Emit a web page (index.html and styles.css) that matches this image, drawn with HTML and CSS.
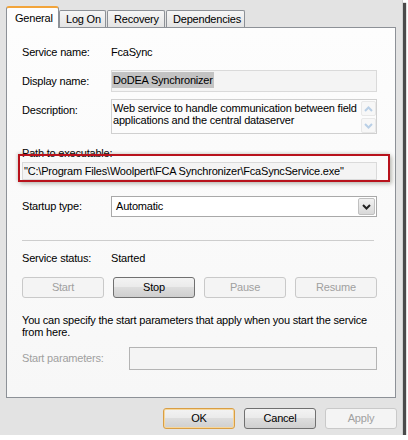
FILE: index.html
```html
<!DOCTYPE html>
<html>
<head>
<meta charset="utf-8">
<link rel="stylesheet" href="styles.css">
</head>
<body>
<div class="dialog">
  <div class="tabs">
    <div class="tab active">General</div>
    <div class="tab">Log On</div>
    <div class="tab">Recovery</div>
    <div class="tab">Dependencies</div>
  </div>
  <div class="panel">
    <div class="row r-name">
      <div class="label">Service name:</div>
      <div class="value">FcaSync</div>
    </div>
    <div class="row r-display">
      <div class="label">Display name:</div>
      <div class="box display"><span class="sel">DoDEA Synchronizer</span></div>
    </div>
    <div class="row r-desc">
      <div class="label desc-label">Description:</div>
      <div class="box textarea">
        <div class="ta-text">Web service to handle communication between field applications and the central dataserver</div>
        <div class="scroll">
          <div class="sbtn"><svg width="9" height="6" viewBox="0 0 9 6"><path d="M1 5 L4.5 1.5 L8 5" fill="none" stroke="#b9cfe6" stroke-width="2"/></svg></div>
          <div class="sbtn"><svg width="9" height="6" viewBox="0 0 9 6"><path d="M1 1 L4.5 4.5 L8 1" fill="none" stroke="#b9cfe6" stroke-width="2"/></svg></div>
        </div>
      </div>
    </div>
    <div class="path-label">Path to executable:</div>
    <div class="path-wrap">
      <div class="box path">"C:\Program Files\Woolpert\FCA Synchronizer\FcaSyncService.exe"</div>
    </div>
    <div class="row r-startup">
      <div class="label">Startup type:</div>
      <div class="box combo">
        <div class="combo-text">Automatic</div>
        <div class="combo-btn"><svg width="9" height="6" viewBox="0 0 9 6"><path d="M1 1 L4.5 4.5 L8 1" fill="none" stroke="#222" stroke-width="2"/></svg></div>
      </div>
    </div>
    <div class="sep"></div>
    <div class="row r-status">
      <div class="label">Service status:</div>
      <div class="value">Started</div>
    </div>
    <div class="svc-buttons">
      <div class="btn disabled">Start</div>
      <div class="btn">Stop</div>
      <div class="btn disabled">Pause</div>
      <div class="btn disabled">Resume</div>
    </div>
    <p class="note">You can specify the start parameters that apply when you start the service from here.</p>
    <div class="row r-params">
      <div class="label params-label">Start parameters:</div>
      <div class="box params"></div>
    </div>
  </div>
  <div class="footer">
    <div class="btn default">OK</div>
    <div class="btn">Cancel</div>
    <div class="btn disabled">Apply</div>
  </div>
</div>
</body>
</html>
```
FILE: styles.css
```css
html, body {
  margin: 0;
  padding: 0;
  background: #ffffff;
}
body {
  font-family: "Liberation Sans", Arial, sans-serif;
  font-size: 11px;
  letter-spacing: -0.2px;
  line-height: 13px;
  color: #000;
}
.dialog {
  width: 403px;
  height: 435px;
  box-sizing: border-box;
  background: #e3e3e3;
  padding: 6px 6px 0 6px;
  box-shadow: 3px 3px 1px #4a4a4a;
  border-right: 1px solid #cfcfcf;
}
.tabs {
  display: flex;
  align-items: flex-end;
  height: 21px;
  position: relative;
  z-index: 2;
}
.tab {
  height: 17px;
  box-sizing: border-box;
  padding: 2px 6px 0 6px;
  border: 1px solid #8d9197;
  border-bottom: none;
  border-radius: 2px 2px 0 0;
  background: linear-gradient(#f6f6f6, #e4e4e4);
  margin-left: -1px;
  white-space: nowrap;
}
.tab:nth-child(2) { width: 47px; margin-left: 0; }
.tab:nth-child(3) { width: 58px; margin-left: 1px; }
.tab:nth-child(4) { width: 79px; margin-left: 1px; }
.tab.active {
  width: 53px;
  height: 22px;
  margin-left: 0;
  margin-bottom: -1px;
  padding: 4px 0 0 8px;
  background: #fdfdfd;
  border-color: #8d9197;
  border-top: 2px solid #f2a43a;
  border-radius: 3px 3px 0 0;
}
.panel {
  position: relative;
  z-index: 1;
  width: 390px;
  height: 371px;
  box-sizing: border-box;
  border: 1px solid #8d9197;
  background: linear-gradient(#fdfdfd, #f7f7f7);
  padding: 16px 18px 0 15px;
}
.row {
  display: flex;
  align-items: center;
}
.label {
  width: 89px;
  flex: none;
}
.r-name { height: 16px; }
.box {
  box-sizing: border-box;
  border: 1px solid #dadada;
  background: #f4f4f4;
}
.r-display { margin-top: 10px; }
.display {
  width: 266px;
  height: 22px;
  padding: 1px 0 0 0;
}
.sel {
  display: inline-block;
  background: #c3c3c3;
  height: 16px;
  line-height: 16px;
  padding: 0 1px;
}
.r-desc {
  margin-top: 7px;
  align-items: flex-start;
}
.desc-label { padding-top: 5px; }
.textarea {
  width: 266px;
  height: 35px;
  display: flex;
  background: #fcfcfc;
  border-color: #d0d0d0;
}
.ta-text {
  flex: 1;
  padding: 2px 0 0 1px;
  line-height: 12px;
}
.scroll {
  width: 15px;
  display: flex;
  flex-direction: column;
  gap: 2px;
  padding-top: 1px;
}
.sbtn {
  height: 15px;
  box-sizing: border-box;
  border: 1px solid #e8e8e8;
  border-radius: 2px;
  background: #f7f7f7;
  display: flex;
  align-items: center;
  justify-content: center;
}
.path-label {
  margin-top: 13px;
  height: 13px;
}
.path-wrap {
  position: relative;
  margin-top: 2px;
}
.path-wrap::after {
  content: "";
  position: absolute;
  left: -4px;
  top: -8px;
  width: 368px;
  height: 24px;
  border: 2px solid #b8121c;
  box-shadow: 2px 2px 4px rgba(80, 80, 60, 0.35), -1px -1px 3px rgba(80, 80, 60, 0.2);
  pointer-events: none;
}
.path {
  width: 355px;
  height: 18px;
  padding: 2px 0 0 1px;
  white-space: nowrap;
}
.r-startup { margin-top: 16px; }
.combo {
  width: 266px;
  height: 21px;
  display: flex;
  background: #fff;
  border-color: #a9a9a9;
}
.combo-text {
  flex: 1;
  padding: 3px 0 0 4px;
}
.combo-btn {
  width: 15px;
  margin: 1px;
  border: 1px solid #c0c0c0;
  border-radius: 2px;
  background: linear-gradient(#f2f2f2, #d8d8d8);
  display: flex;
  align-items: center;
  justify-content: center;
}
.sep {
  margin-top: 23px;
  width: 352px;
  height: 1px;
  background: #cdcdcd;
}
.r-status {
  margin-top: 11px;
  height: 13px;
}
.svc-buttons {
  margin-top: 12px;
  display: grid;
  grid-template-columns: repeat(4, 82px);
  column-gap: 9px;
}
.btn {
  height: 21px;
  box-sizing: border-box;
  border: 1px solid #707070;
  border-radius: 3px;
  background: linear-gradient(#f3f3f3 0%, #ebebeb 45%, #dddddd 50%, #cfcfcf 100%);
  text-align: center;
  line-height: 19px;
}
.btn.disabled {
  border-color: #c9c9c9;
  background: #f4f4f4;
  color: #a0a0a0;
}
.btn.default {
  border-color: #d99e44;
  box-shadow: inset 0 0 0 1px #f6d79c;
}
.note {
  margin: 16px 0 0 0;
  line-height: 12px;
}
.r-params { margin-top: 9px; }
.params-label {
  width: 107px;
  color: #a0a0a0;
}
.params {
  width: 248px;
  height: 23px;
  border-color: #b4b4b4;
  background: #f4f4f4;
}
.footer {
  display: flex;
  justify-content: flex-end;
  gap: 9px;
  width: 391px;
  margin-top: 10px;
}
.footer .btn { width: 72px; }
```
